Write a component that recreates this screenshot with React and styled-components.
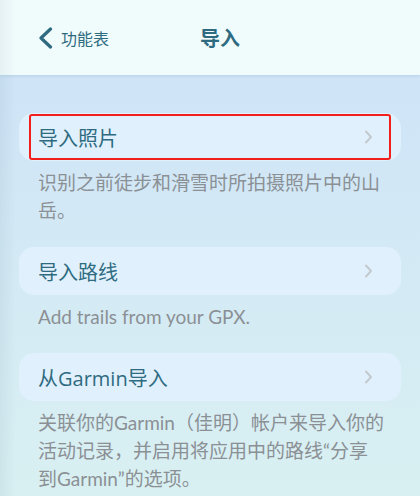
import React from 'react';
import styled, { createGlobalStyle } from 'styled-components';

const GlobalStyle = createGlobalStyle`
  html, body {
    margin: 0;
    padding: 0;
  }
  body {
    font-family: "Lato", "Noto Sans CJK SC", sans-serif;
  }
`;

const Screen = styled.div`
  width: 420px;
  height: 496px;
  overflow: hidden;
  background:
    linear-gradient(90deg, rgba(120, 150, 170, 0.12) 0px, rgba(120, 150, 170, 0) 16px),
    linear-gradient(180deg, #cde2f8 0%, #d3e9f5 50%, #d9f0f2 100%);
  display: flex;
  flex-direction: column;
`;

const Header = styled.header`
  height: 75px;
  flex-shrink: 0;
  display: flex;
  align-items: center;
  padding-left: 38px;
  background:
    linear-gradient(90deg, rgba(150, 175, 185, 0.12) 0px, rgba(150, 175, 185, 0) 16px),
    #f0fbfc;
  box-shadow: 0 1px 3px rgba(100, 140, 170, 0.2);
  position: relative;
  z-index: 1;
`;

const BackLink = styled.a`
  display: flex;
  align-items: center;
  gap: 8px;
  color: #2f6b80;
  font-family: "Noto Sans CJK SC", sans-serif;
  font-size: 16px;
  text-decoration: none;
  cursor: pointer;
`;

const Title = styled.h1`
  margin: 0 0 0 91px;
  font-family: "Noto Sans CJK SC", sans-serif;
  font-size: 20px;
  font-weight: 700;
  color: #2f6b80;
`;

const List = styled.main`
  display: flex;
  flex-direction: column;
  gap: 22px;
  padding: 38px 19px 0;
`;

const Section = styled.section`
  display: flex;
  flex-direction: column;
`;

const Card = styled.button`
  position: relative;
  height: 48px;
  border: none;
  border-radius: 15px;
  background: #e0f1fd;
  display: flex;
  align-items: center;
  justify-content: space-between;
  padding: 0 28px 0 19px;
  font-family: "Open Sans", "Noto Sans CJK SC", sans-serif;
  font-size: 20px;
  color: #2f6b80;
  cursor: pointer;
`;

const Highlight = styled.span`
  position: absolute;
  left: 10px;
  right: 10px;
  top: 1px;
  bottom: 1px;
  border: 2px solid #f2201c;
  border-radius: 3px;
  pointer-events: none;
`;

const Note = styled.p`
  margin: 8px 0 0;
  padding: 0 13px 0 19px;
  font-family: "Lato", "Noto Sans CJK SC", sans-serif;
  font-size: 19px;
  line-height: 28px;
  color: #8b9095;
`;

const Keep = styled.span`
  white-space: nowrap;
`;

const BackIcon = () => (
  <svg width="15" height="22" viewBox="0 0 15 22" fill="none">
    <path d="M12.5 2 L3 11 L12.5 20" stroke="#2f6b80" strokeWidth="3.2" strokeLinecap="round" strokeLinejoin="round" />
  </svg>
);

const Chevron = () => (
  <svg width="9" height="14" viewBox="0 0 9 14" fill="none">
    <path d="M2 1.5 L7 7 L2 12.5" stroke="#c3cacd" strokeWidth="2" strokeLinecap="round" strokeLinejoin="round" />
  </svg>
);

const items = [
  {
    title: '导入照片',
    note: '识别之前徒步和滑雪时所拍摄照片中的山岳。',
    active: true,
  },
  {
    title: '导入路线',
    note: 'Add trails from your GPX.',
  },
  {
    title: '从Garmin导入',
    note: (
      <>
        关联你的Garmin（佳明）帐户来导入你的活动记录，并启用将应用中的路线“分享<Keep>到Garmin”</Keep>的选项。
      </>
    ),
  },
];

export default function App() {
  return (
    <>
      <GlobalStyle />
      <Screen>
        <Header>
          <BackLink>
            <BackIcon />
            功能表
          </BackLink>
          <Title>导入</Title>
        </Header>
        <List>
          {items.map((item) => (
            <Section key={item.title}>
              <Card>
                {item.title}
                <Chevron />
                {item.active && <Highlight />}
              </Card>
              <Note>{item.note}</Note>
            </Section>
          ))}
        </List>
      </Screen>
    </>
  );
}
